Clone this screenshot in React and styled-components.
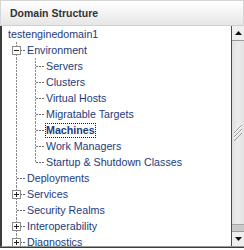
import React from "react"
import styled, { createGlobalStyle } from "styled-components"

const GlobalStyle = createGlobalStyle`
  html, body {
    margin: 0;
    padding: 0;
    background: #ffffff;
  }
  body {
    font-family: "Liberation Sans", Arial, sans-serif;
  }
`

const Panel = styled.div`
  width: 244px;
  height: 250px;
  box-sizing: border-box;
  display: flex;
  flex-direction: column;
  background: #fff;
  overflow: hidden;
`

const Header = styled.div`
  height: 26px;
  box-sizing: border-box;
  flex: none;
  display: flex;
  align-items: center;
  padding: 0 0 1px 9px;
  border: 1px solid #d6d6d6;
  border-bottom: 1px solid #d0d0d0;
  background: linear-gradient(to bottom, #ffffff 0%, #f4f4f4 45%, #e6e6e6 100%);
  color: #333;
  font-size: 10.5px;
  font-weight: bold;
`

const Body = styled.div`
  flex: 1;
  min-height: 0;
  display: flex;
  border-left: 2px solid #3c3c3c;
  border-bottom: 1px solid #9a9a9a;
  box-shadow: 0 1px 0 #3c3c3c;
  margin-bottom: 3px;
`

const Tree = styled.div`
  flex: 1;
  overflow: hidden;
  padding: 0 0 0 6px;
`

const Row = styled.div`
  display: flex;
  align-items: stretch;
  height: 16px;
`

const Gutter = styled.div`
  position: relative;
  flex: none;
  width: ${p => p.$w}px;
  height: 16px;

  &::before {
    content: "";
    display: ${p => (p.$line ? "block" : "none")};
    position: absolute;
    left: ${p => p.$x}px;
    top: 0;
    width: 1px;
    height: ${p => (p.$half ? "8px" : "16px")};
    background: repeating-linear-gradient(to bottom, #8a8a8a 0 2px, transparent 2px 3px);
  }

  &::after {
    content: "";
    display: ${p => (p.$branch ? "block" : "none")};
    position: absolute;
    left: ${p => p.$x + 1}px;
    right: 1px;
    top: 8px;
    height: 1px;
    background: repeating-linear-gradient(to right, #6a6a6a 0 2px, transparent 2px 3px);
  }
`

const Toggle = styled.span`
  position: absolute;
  z-index: 1;
  left: ${p => p.$x - 4}px;
  top: 4px;
  width: 9px;
  height: 9px;
  box-sizing: border-box;
  border: 1px solid #8c8c8c;
  background: #fff;

  &::before,
  &::after {
    content: "";
    position: absolute;
    background: #222;
  }
  &::before {
    left: 1px;
    right: 1px;
    top: 3px;
    height: 1px;
  }
  &::after {
    display: ${p => (p.$open ? "none" : "block")};
    top: 1px;
    bottom: 1px;
    left: 3px;
    width: 1px;
  }
`

const Label = styled.span`
  display: flex;
  align-items: center;
  padding: 0 1px;
  margin-left: -1px;
  height: 15px;
  align-self: center;
  white-space: nowrap;
  font-size: 10.7px;
  color: #1d3b7c;
  font-weight: ${p => (p.$selected ? "bold" : "normal")};
  outline: ${p => (p.$selected ? "1px dotted #222" : "none")};
  outline-offset: -1px;
`

const Scrollbar = styled.div`
  flex: none;
  width: 12px;
  display: flex;
  flex-direction: column;
  border-left: 1px solid #4a4a4a;
  background: #c9c9c9;
`

const ArrowButton = styled.div`
  flex: none;
  height: 15px;
  box-sizing: border-box;
  display: flex;
  align-items: center;
  justify-content: center;
  background: #efefef;
  border-top: ${p => (p.$down ? "1px solid #9a9a9a" : "none")};
  border-bottom: ${p => (p.$down ? "none" : "1px solid #9a9a9a")};
`

const Thumb = styled.div`
  flex: 1;
  margin-bottom: 6px;
  display: flex;
  align-items: center;
  justify-content: center;
  background: linear-gradient(to right, #e0e0e0, #ececec 50%, #e2e2e2);
  border-bottom: 1px solid #a8a8a8;
`

const L1 = { w: 19, x: 8 }
const L2 = { w: 19, x: 8 }

const rows = [
  { label: "testenginedomain1", gutters: [] },
  { label: "Environment", gutters: [{ ...L1, line: true, branch: true, toggle: "open" }] },
  { label: "Servers", gutters: [{ ...L1, line: true }, { ...L2, line: true, branch: true }] },
  { label: "Clusters", gutters: [{ ...L1, line: true }, { ...L2, line: true, branch: true }] },
  { label: "Virtual Hosts", gutters: [{ ...L1, line: true }, { ...L2, line: true, branch: true }] },
  { label: "Migratable Targets", gutters: [{ ...L1, line: true }, { ...L2, line: true, branch: true }] },
  { label: "Machines", selected: true, gutters: [{ ...L1, line: true }, { ...L2, line: true, branch: true }] },
  { label: "Work Managers", gutters: [{ ...L1, line: true }, { ...L2, line: true, branch: true }] },
  { label: "Startup & Shutdown Classes", gutters: [{ ...L1, line: true }, { ...L2, line: true, half: true, branch: true }] },
  { label: "Deployments", gutters: [{ ...L1, line: true, branch: true }] },
  { label: "Services", gutters: [{ ...L1, line: true, branch: true, toggle: "closed" }] },
  { label: "Security Realms", gutters: [{ ...L1, line: true, branch: true }] },
  { label: "Interoperability", gutters: [{ ...L1, line: true, branch: true, toggle: "closed" }] },
  { label: "Diagnostics", gutters: [{ ...L1, line: true, branch: true, toggle: "closed" }] },
]

function Grip() {
  return (
    <svg width="10" height="18" viewBox="0 0 10 18">
      <g stroke="#9c9c9c" strokeWidth="1">
        <line x1="1" y1="9" x2="9" y2="1" />
        <line x1="1" y1="13" x2="9" y2="5" />
        <line x1="1" y1="17" x2="9" y2="9" />
      </g>
      <g stroke="#fff" strokeWidth="1">
        <line x1="1" y1="10" x2="9" y2="2" />
        <line x1="1" y1="14" x2="9" y2="6" />
      </g>
    </svg>
  )
}

function Arrow({ down }) {
  return (
    <svg width="7" height="4" viewBox="0 0 7 4">
      <path d={down ? "M0 0h7L3.5 4z" : "M0 4h7L3.5 0z"} fill="#111" />
    </svg>
  )
}

export default function App() {
  return (
    <>
      <GlobalStyle />
      <Panel>
        <Header>Domain Structure</Header>
        <Body>
          <Tree>
            {rows.map((r, i) => (
              <Row key={i}>
                {r.gutters.map((g, j) => (
                  <Gutter key={j} $w={g.w} $x={g.x} $line={g.line} $half={g.half} $branch={g.branch}>
                    {g.toggle && <Toggle $x={g.x} $open={g.toggle === "open"} />}
                  </Gutter>
                ))}
                <Label $selected={r.selected}>{r.label}</Label>
              </Row>
            ))}
          </Tree>
          <Scrollbar>
            <ArrowButton>
              <Arrow />
            </ArrowButton>
            <Thumb>
              <Grip />
            </Thumb>
            <ArrowButton $down>
              <Arrow down />
            </ArrowButton>
          </Scrollbar>
        </Body>
      </Panel>
    </>
  )
}
